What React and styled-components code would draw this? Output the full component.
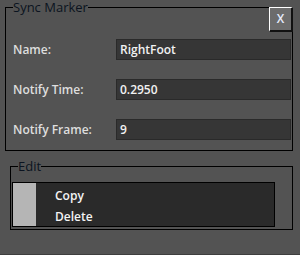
import React from "react";
import styled, { createGlobalStyle } from "styled-components";

const GlobalStyle = createGlobalStyle`
  html, body {
    margin: 0;
    padding: 0;
    background: #535353;
  }
  body {
    font-family: "Open Sans", "Liberation Sans", Arial, sans-serif;
    font-size: 12px;
    color: #e2e2e2;
  }
`;

// Styled Components

const Panel = styled.div`
  position: relative;
  box-sizing: border-box;
  height: 255px;
  padding: 0 7px 0 5px;
  display: flex;
  flex-direction: column;
  gap: 8px;
  background: #535353;
  border-bottom: 1px solid #3e3e3e;
`;

const Frame = styled.fieldset`
  margin: 0 0 0 ${({ $inset }) => $inset || 0}px;
  padding: ${({ $pad }) => $pad};
  border: 1px solid #000;
  min-width: 0;
`;

const FrameTitle = styled.legend`
  padding: 0;
  margin-left: ${({ $shift }) => $shift || 0}px;
  font-family: "Open Sans", "Liberation Sans", Arial, sans-serif;
  font-size: 13px;
  font-weight: 500;
  line-height: 15px;
  color: #0b1320;
`;

const CloseButton = styled.button`
  position: absolute;
  top: 7px;
  right: 7px;
  box-sizing: border-box;
  width: 24px;
  height: 25px;
  padding: 0;
  background: #6c6c6c;
  border-style: solid;
  border-width: 1px 2px 2px 1px;
  border-color: #fff #111 #111 #fff;
  color: #e8eeff;
  font-family: "Open Sans", "Liberation Sans", Arial, sans-serif;
  font-size: 12px;
  font-weight: 600;
  line-height: 20px;
`;

const Fields = styled.div`
  display: grid;
  grid-template-columns: 103px 175px;
  row-gap: 19px;
  align-items: center;
`;

const Label = styled.div`
  color: #dedede;
  font-size: 12px;
  font-weight: 600;
`;

const Value = styled.div`
  box-sizing: border-box;
  height: 21px;
  padding: 0 3px;
  background: #363636;
  border: 1px solid #2a2a2a;
  color: #f2f2f2;
  font-size: 12px;
  font-weight: 600;
  line-height: 19px;
`;

const MenuList = styled.div`
  display: flex;
  border: 1px solid #000;
  background: #2a2a2a;
  width: 261px;
  height: 43px;
`;

const Gutter = styled.div`
  width: 23px;
  background: #b5b5b5;
`;

const Items = styled.div`
  display: flex;
  flex-direction: column;
  padding: 2px 0 0 19px;
`;

const Item = styled.div`
  height: 21px;
  line-height: 21px;
  color: #f4f4f4;
  font-size: 12px;
  font-weight: 600;
`;

// Component
const App = () => {
  return (
    <>
      <GlobalStyle />
      <Panel>
        <Frame $pad="24px 1px 10px 7px">
          <FrameTitle>Sync Marker</FrameTitle>
          <Fields>
            <Label>Name:</Label>
            <Value>RightFoot</Value>
            <Label>Notify Time:</Label>
            <Value>0.2950</Value>
            <Label>Notify Frame:</Label>
            <Value>9</Value>
          </Fields>
        </Frame>
        <CloseButton>X</CloseButton>

        <Frame $inset={5} $pad="8px 1px 2px 1px">
          <FrameTitle $shift={6}>Edit</FrameTitle>
          <MenuList>
            <Gutter />
            <Items>
              <Item>Copy</Item>
              <Item>Delete</Item>
            </Items>
          </MenuList>
        </Frame>
      </Panel>
    </>
  );
};

export default App;
